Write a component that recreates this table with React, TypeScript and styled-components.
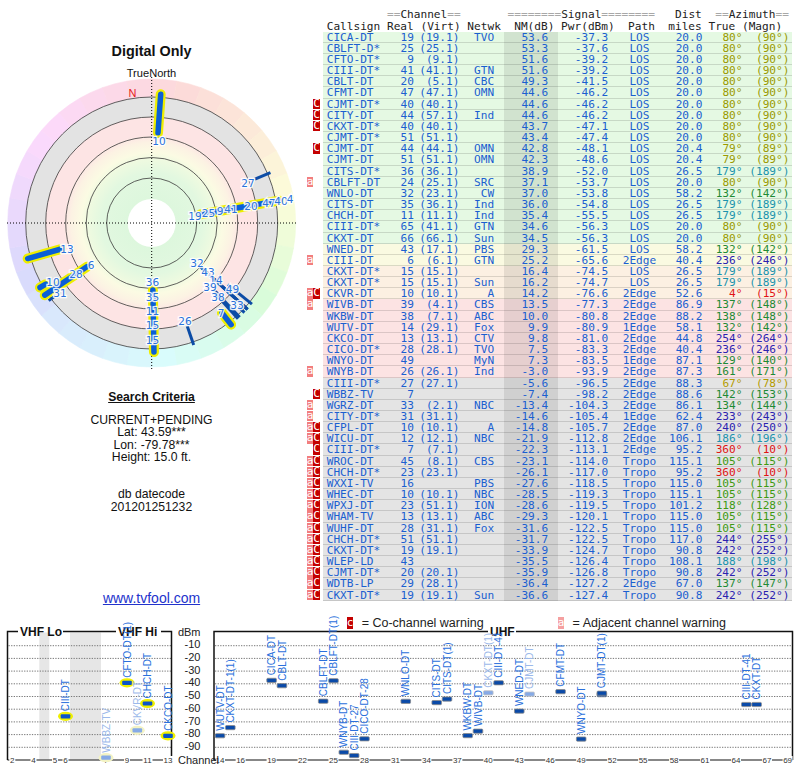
import React from "react";
import styled, { createGlobalStyle } from "styled-components";

const MONO = `"DejaVu Sans Mono", "Liberation Mono", monospace`;
const SANS = `"Liberation Sans", Arial, sans-serif`;
const RH = 11.17;

const GlobalStyle = createGlobalStyle`
  html, body { margin: 0; padding: 0; background: #ffffff; }
  body { font-family: ${SANS}; }
`;

type Band = "g" | "y" | "o" | "p" | "x";
type R = [string, string, string, string, string, number, string, string, string, number, number, Band];

const ROWS: R[] = [
  ["", "CICA-DT", "19", "(19.1)", "TVO", 53.6, "-37.3", "LOS", "20.0", 80, 90, "g"],
  ["", "CBLFT-D*", "25", "(25.1)", "", 53.3, "-37.6", "LOS", "20.0", 80, 90, "g"],
  ["", "CFTO-DT*", "9", "(9.1)", "", 51.6, "-39.2", "LOS", "20.0", 80, 90, "g"],
  ["", "CIII-DT*", "41", "(41.1)", "GTN", 51.6, "-39.2", "LOS", "20.0", 80, 90, "g"],
  ["", "CBLT-DT", "20", "(5.1)", "CBC", 49.3, "-41.5", "LOS", "20.0", 80, 90, "g"],
  ["", "CFMT-DT", "47", "(47.1)", "OMN", 44.6, "-46.2", "LOS", "20.0", 80, 90, "g"],
  ["c", "CJMT-DT*", "40", "(40.1)", "", 44.6, "-46.2", "LOS", "20.0", 80, 90, "g"],
  ["c", "CITY-DT", "44", "(57.1)", "Ind", 44.6, "-46.2", "LOS", "20.0", 80, 90, "g"],
  ["c", "CKXT-DT*", "40", "(40.1)", "", 43.7, "-47.1", "LOS", "20.0", 80, 90, "g"],
  ["", "CJMT-DT*", "51", "(51.1)", "", 43.4, "-47.4", "LOS", "20.0", 80, 90, "g"],
  ["c", "CJMT-DT", "44", "(44.1)", "OMN", 42.8, "-48.1", "LOS", "20.4", 79, 89, "g"],
  ["", "CJMT-DT", "51", "(51.1)", "OMN", 42.3, "-48.6", "LOS", "20.4", 79, 89, "g"],
  ["", "CITS-DT*", "36", "(36.1)", "", 38.9, "-52.0", "LOS", "26.5", 179, 189, "g"],
  ["a", "CBLFT-DT", "24", "(25.1)", "SRC", 37.1, "-53.7", "LOS", "20.0", 80, 90, "g"],
  ["", "WNLO-DT", "32", "(23.1)", "CW", 37.0, "-53.8", "LOS", "58.2", 132, 142, "g"],
  ["", "CITS-DT", "35", "(36.1)", "Ind", 36.0, "-54.8", "LOS", "26.5", 179, 189, "g"],
  ["", "CHCH-DT", "11", "(11.1)", "Ind", 35.4, "-55.5", "LOS", "26.5", 179, 189, "g"],
  ["", "CIII-DT*", "65", "(41.1)", "GTN", 34.6, "-56.3", "LOS", "20.0", 80, 90, "g"],
  ["", "CKXT-DT", "66", "(66.1)", "Sun", 34.5, "-56.3", "LOS", "20.0", 80, 90, "g"],
  ["", "WNED-DT", "43", "(17.1)", "PBS", 29.3, "-61.5", "LOS", "58.2", 132, 142, "y"],
  ["a", "CIII-DT", "6", "(6.1)", "GTN", 25.2, "-65.6", "2Edge", "40.4", 236, 246, "y"],
  ["", "CKXT-DT*", "15", "(15.1)", "", 16.4, "-74.5", "LOS", "26.5", 179, 189, "o"],
  ["", "CKXT-DT*", "15", "(15.1)", "Sun", 16.2, "-74.7", "LOS", "26.5", 179, 189, "o"],
  ["ac", "CKVR-DT", "10", "(10.1)", "A", 14.2, "-76.6", "2Edge", "52.6", 4, 15, "o"],
  ["a", "WIVB-DT", "39", "(4.1)", "CBS", 13.5, "-77.3", "2Edge", "86.9", 137, 148, "p"],
  ["", "WKBW-DT", "38", "(7.1)", "ABC", 10.0, "-80.8", "2Edge", "88.2", 138, 148, "p"],
  ["", "WUTV-DT", "14", "(29.1)", "Fox", 9.9, "-80.9", "1Edge", "58.1", 132, 142, "p"],
  ["", "CKCO-DT", "13", "(13.1)", "CTV", 9.8, "-81.0", "2Edge", "44.8", 254, 264, "p"],
  ["", "CICO-DT*", "28", "(28.1)", "TVO", 7.5, "-83.3", "2Edge", "40.4", 236, 246, "p"],
  ["", "WNYO-DT", "49", "", "MyN", 7.3, "-83.5", "1Edge", "87.1", 129, 140, "p"],
  ["a", "WNYB-DT", "26", "(26.1)", "Ind", -3.0, "-93.9", "2Edge", "87.3", 161, 171, "p"],
  ["", "CIII-DT*", "27", "(27.1)", "", -5.6, "-96.5", "2Edge", "88.3", 67, 78, "x"],
  ["c", "WBBZ-TV", "7", "", "", -7.4, "-98.2", "2Edge", "88.6", 142, 153, "x"],
  ["a", "WGRZ-DT", "33", "(2.1)", "NBC", -13.4, "-104.3", "2Edge", "86.1", 134, 144, "x"],
  ["a", "CITY-DT*", "31", "(31.1)", "", -14.6, "-105.4", "1Edge", "62.4", 233, 243, "x"],
  ["ac", "CFPL-DT", "10", "(10.1)", "A", -14.8, "-105.7", "2Edge", "87.0", 240, 250, "x"],
  ["ac", "WICU-DT", "12", "(12.1)", "NBC", -21.9, "-112.8", "2Edge", "106.1", 186, 196, "x"],
  ["c", "CIII-DT*", "7", "(7.1)", "", -22.3, "-113.1", "2Edge", "95.2", 360, 10, "x"],
  ["ac", "WROC-DT", "45", "(8.1)", "CBS", -23.1, "-114.0", "Tropo", "115.1", 105, 115, "x"],
  ["ac", "CHCH-DT*", "23", "(23.1)", "", -26.1, "-117.0", "Tropo", "95.2", 360, 10, "x"],
  ["ac", "WXXI-TV", "16", "", "PBS", -27.6, "-118.5", "Tropo", "115.0", 105, 115, "x"],
  ["ac", "WHEC-DT", "10", "(10.1)", "NBC", -28.5, "-119.3", "Tropo", "115.1", 105, 115, "x"],
  ["ac", "WPXJ-DT", "23", "(51.1)", "ION", -28.6, "-119.5", "Tropo", "101.2", 118, 128, "x"],
  ["ac", "WHAM-TV", "13", "(13.1)", "ABC", -29.3, "-120.1", "Tropo", "115.0", 105, 115, "x"],
  ["ac", "WUHF-DT", "28", "(31.1)", "Fox", -31.6, "-122.5", "Tropo", "115.0", 105, 115, "x"],
  ["ac", "CHCH-DT*", "51", "(51.1)", "", -31.7, "-122.5", "Tropo", "117.0", 244, 255, "x"],
  ["ac", "CKXT-DT*", "19", "(19.1)", "", -33.9, "-124.7", "Tropo", "90.8", 242, 252, "x"],
  ["ac", "WLEP-LD", "43", "", "", -35.5, "-126.4", "Tropo", "108.1", 188, 198, "x"],
  ["ac", "CJMT-DT*", "20", "(20.1)", "", -35.9, "-126.8", "Tropo", "90.8", 242, 252, "x"],
  ["ac", "WDTB-LP", "29", "(28.1)", "", -36.4, "-127.2", "2Edge", "67.0", 137, 147, "x"],
  ["ac", "CKXT-DT*", "19", "(19.1)", "Sun", -36.6, "-127.4", "Tropo", "90.8", 242, 252, "x"],
];

const BAND_BG: Record<Band, string> = {
  g: "#e5f9e3",
  y: "#fafae1",
  o: "#fcf0e2",
  p: "#fce3e3",
  x: "#e4e4e4",
};

const azColor = (az: number) => {
  if (az >= 350 || az < 20) return "#e01414";
  if (az < 72) return "#b39b00";
  if (az < 95) return "#9a9a00";
  if (az < 125) return "#3e9a12";
  if (az < 170) return "#1e8a35";
  if (az < 200) return "#1b93ad";
  return "#2b22b0";
};

/* ---------- layout ---------- */

const Page = styled.div`
  width: 800px;
  height: 768px;
  overflow: hidden;
  font-family: ${SANS};
  color: #111;
`;

const Top = styled.div`
  display: flex;
  height: 615px;
`;

const LeftCol = styled.div`
  width: 303px;
  flex: none;
  display: flex;
  flex-direction: column;
  align-items: center;
  padding-top: 43px;
  box-sizing: border-box;
  text-align: center;
`;

const Title = styled.div`
  font-weight: bold;
  font-size: 14.4px;
  line-height: 17px;
`;

const NorthLabel = styled.div`
  font-size: 11.1px;
  line-height: 13px;
  margin-top: 7px;
`;

const RadarSvg = styled.svg`
  display: block;
  margin-top: -2px;
  overflow: visible;
`;

const CriteriaTitle = styled.div`
  font-weight: bold;
  font-size: 12.2px;
  line-height: 15px;
  text-decoration: underline;
  margin-top: 17.8px;
`;

const InfoBlock = styled.div<{ $gap: number }>`
  font-size: 12.2px;
  line-height: 12.4px;
  margin-top: ${(p) => p.$gap}px;
`;

const SiteLink = styled.a`
  display: block;
  font-size: 14px;
  line-height: 16px;
  margin-top: 77.4px;
  color: #2233cc;
  text-decoration: underline;
`;

/* ---------- table ---------- */

const TableWrap = styled.div`
  flex: none;
  width: 489px;
  padding-top: 9.4px;
  font-family: ${MONO};
  font-size: 11.13px;
`;

const HeadLine = styled.div`
  padding-left: 23.7px;
  height: ${RH}px;
  line-height: ${RH}px;
  white-space: pre;
  color: #222;
`;

const Eq = styled.span`
  color: #a8a8a8;
`;

const Row = styled.div`
  display: flex;
  height: ${RH}px;
  line-height: ${RH}px;
`;

const Flags = styled.div`
  width: 20px;
  flex: none;
  display: flex;
  justify-content: flex-end;
  padding-right: 3px;
  box-sizing: border-box;
`;

const Flag = styled.span<{ $kind: "a" | "c" | "" }>`
  width: 6.7px;
  height: 10.3px;
  line-height: 10.3px;
  text-align: center;
  color: #fff;
  background: ${(p) => (p.$kind === "a" ? "#f27e7e" : p.$kind === "c" ? "#c40000" : "transparent")};
`;

const Cells = styled.div<{ $bg: string }>`
  flex: 1;
  display: grid;
  grid-template-columns: 56px 35px 45.4px 34.8px 9.8px 54px 50.3px 62.4px 31.8px 40px 47px 2.5px;
  background: ${(p) => p.$bg};
  box-shadow: inset 0 -1px 0 rgba(0, 0, 0, 0.13);
  color: #1b5fd0;
`;

const Cell = styled.span<{ $align?: "flex-start" | "flex-end" | "center" }>`
  display: flex;
  justify-content: ${(p) => p.$align ?? "flex-end"};
  white-space: pre;
`;

const CallCell = styled(Cell)`
  padding-left: 3.7px;
`;

const NmCell = styled(Cell)`
  background: rgba(0, 0, 0, 0.085);
  padding-right: 9.8px;
`;

const AzCell = styled(Cell)<{ $color: string }>`
  color: ${(p) => p.$color};
`;

/* ---------- bottom ---------- */

const Bottom = styled.div`
  height: 153px;
`;

const Legend = styled.div`
  display: flex;
  align-items: center;
  height: 16px;
  padding-left: 346.7px;
  gap: 74px;
  font-size: 12.5px;
  color: #222;
`;

const LegendItem = styled.div`
  display: flex;
  align-items: center;
  gap: 8.3px;
`;

const LegendBadge = styled.span<{ $kind: "a" | "c" }>`
  width: 6.7px;
  height: 11.7px;
  line-height: 11.7px;
  text-align: center;
  font-family: ${MONO};
  font-size: 11px;
  color: #fff;
  background: ${(p) => (p.$kind === "a" ? "#f5a0a0" : "#c40000")};
`;

const ChartSvg = styled.svg`
  display: block;
  overflow: visible;
`;

/* ---------- radar ---------- */

const CX = 151.7;
const CY = 145;
const pt = (r: number, az: number): [number, number] => {
  const a = (az * Math.PI) / 180;
  return [CX + r * Math.sin(a), CY - r * Math.cos(a)];
};
const ringPath = (r1: number, r2: number, a1: number, a2: number) => {
  const [x1, y1] = pt(r2, a1);
  const [x2, y2] = pt(r2, a2);
  const [x3, y3] = pt(r1, a2);
  const [x4, y4] = pt(r1, a1);
  return `M${x1} ${y1}A${r2} ${r2} 0 0 1 ${x2} ${y2}L${x3} ${y3}A${r1} ${r1} 0 0 0 ${x4} ${y4}Z`;
};
const HUE_STOPS: [number, number][] = [
  [0, 350], [30, 375], [60, 400], [90, 435], [135, 495], [180, 545], [225, 575], [270, 625], [315, 665], [360, 710],
];
const hueFor = (az: number) => {
  for (let i = 0; i < HUE_STOPS.length - 1; i++) {
    const [a0, h0] = HUE_STOPS[i];
    const [a1, h1] = HUE_STOPS[i + 1];
    if (az >= a0 && az <= a1) return (h0 + ((az - a0) / (a1 - a0)) * (h1 - h0)) % 360;
  }
  return 350;
};

const RADAR_LABELS: [string, number, number][] = [
  ["10", 159, 141], ["27", 248, 183],
  ["19", 195, 215.5], ["25", 208.5, 213], ["9", 220, 211], ["41", 231, 209], ["20", 251, 205.5], ["47", 269, 202.5], ["40", 281, 200.5], ["4", 290, 199],
  ["36", 152.5, 282], ["35", 152.5, 296.5], ["11", 152.5, 310.5], ["15", 152.5, 325], ["15", 152.5, 339.5],
  ["32", 197, 263], ["43", 208, 272], ["14", 216, 280], ["39", 210, 286.5], ["49", 232.5, 289], ["38", 218, 297], ["33", 237, 305], ["7", 221, 313],
  ["26", 185, 320.5],
  ["13", 67, 249], ["6", 91, 264.5], ["28", 76, 274], ["10", 53, 281.5], ["31", 60, 293],
];

function Radar() {
  const wedges = [];
  for (let i = 0; i < 36; i++) {
    const a1 = i * 10;
    const c = `hsl(${hueFor(a1 + 5)}, 85%, 92%)`;
    wedges.push(<path key={i} d={ringPath(126, 144, a1, a1 + 10)} fill={c} stroke={c} strokeWidth={0.6} />);
  }
  const shown = ROWS.filter((r) => r[5] > -20).map((r) => ({
    az: r[9],
    ri: 106 - 1.1 * r[5],
    vhf: parseInt(r[2], 10) <= 13,
  }));
  const thin = shown.filter((s) => !s.vhf);
  const vhf = shown.filter((s) => s.vhf);
  return (
    <RadarSvg width={303} height={294} viewBox="0 0 303 294">
      <defs>
        <radialGradient id="bands" cx={CX} cy={CY} r={126} gradientUnits="userSpaceOnUse">
          <stop offset="0.19" stopColor="#ddf7dd" />
          <stop offset="0.40" stopColor="#e2f8e0" />
          <stop offset="0.50" stopColor="#eefae0" />
          <stop offset="0.56" stopColor="#fbfbe3" />
          <stop offset="0.64" stopColor="#fcf2e3" />
          <stop offset="0.70" stopColor="#fde4e4" />
          <stop offset="0.838" stopColor="#fde4e4" />
          <stop offset="0.846" stopColor="#e3e3e3" />
          <stop offset="1" stopColor="#e3e3e3" />
        </radialGradient>
      </defs>
      {wedges}
      <circle cx={CX} cy={CY} r={126} fill="url(#bands)" />
      <circle cx={CX} cy={CY} r={24} fill="#ffffff" />
      {[126, 106, 86, 65.5, 45].map((r) => (
        <circle key={r} cx={CX} cy={CY} r={r} fill="none" stroke="#3a3a3a" strokeWidth={0.8} />
      ))}
      <line x1={7} y1={CY} x2={297} y2={CY} stroke="#000" strokeWidth={1} strokeDasharray="1 2" />
      <line x1={CX} y1={CY - 146} x2={CX} y2={CY + 146} stroke="#000" strokeWidth={1} strokeDasharray="1 2" />
      <text x={132.5} y={19} fontSize={11} fill="#e52020" textAnchor="middle" fontFamily={SANS}>
        N
      </text>
      {thin.map((s, i) => {
        const [x1, y1] = pt(s.ri, s.az);
        const [x2, y2] = pt(129, s.az);
        return <line key={`t${i}`} x1={x1} y1={y1} x2={x2} y2={y2} stroke="#0c4ca6" strokeWidth={3} />;
      })}
      {vhf.map((s, i) => {
        const [x1, y1] = pt(s.ri, s.az);
        const [x2, y2] = pt(129, s.az);
        return (
          <g key={`v${i}`}>
            <line x1={x1} y1={y1} x2={x2} y2={y2} stroke="#eeee00" strokeWidth={10} strokeLinecap="round" />
            <line x1={x1} y1={y1} x2={x2} y2={y2} stroke="#0b5fd6" strokeWidth={5.5} strokeLinecap="round" />
          </g>
        );
      })}
      {RADAR_LABELS.map(([t, x, y], i) => (
        <text
          key={`l${i}`}
          x={x}
          y={y - 78}
          fontSize={10.5}
          fontFamily={`"DejaVu Sans", ${SANS}`}
          fill="#2a72dc"
          stroke="#ffffff"
          strokeWidth={2.6}
          strokeOpacity={0.9}
          paintOrder="stroke"
          textAnchor="middle"
          dominantBaseline="central"
        >
          {t}
        </text>
      ))}
    </RadarSvg>
  );
}

/* ---------- chart ---------- */

const gy = (dbm: number) => 645.7 + (-dbm - 10) * 1.27;
const ux = (ch: number) => 220 + (ch - 14) * 10.32;
const VX: Record<number, number> = { 2: 12.3, 3: 22.7, 4: 33.5, 5: 55, 6: 65.5, 7: 106, 8: 116.5, 9: 127, 10: 137.3, 11: 147.5, 12: 157.8, 13: 168 };

type Mk = { x: number; p: number; label?: string; vhf?: boolean; faded?: boolean };
const MARKERS: Mk[] = [
  { x: VX[6], p: -65.6, label: "CIII-DT", vhf: true },
  { x: VX[7], p: -98.2, label: "WBBZ-TV", vhf: true, faded: true },
  { x: VX[9], p: -39.2, label: "CFTO-DT(1)", vhf: true },
  { x: VX[10], p: -76.6, label: "CKVR-DT", vhf: true, faded: true },
  { x: VX[11], p: -55.5, label: "CHCH-DT", vhf: true },
  { x: VX[13], p: -81.0, label: "CKCO-DT", vhf: true },
  { x: ux(14), p: -80.9, label: "WUTV-DT" },
  { x: ux(15), p: -74.5, label: "CKXT-DT-1(1)" },
  { x: ux(19), p: -37.3, label: "CICA-DT" },
  { x: ux(20), p: -41.5, label: "CBLT-DT" },
  { x: ux(24), p: -53.7, label: "CBLFT-DT" },
  { x: ux(25), p: -37.6, label: "CBLFT-DT(1)" },
  { x: ux(26), p: -93.9, label: "WNYB-DT" },
  { x: ux(27), p: -96.5, label: "CIII-DT-27" },
  { x: ux(28), p: -83.3, label: "CICO-DT-28" },
  { x: ux(32), p: -53.8, label: "WNLO-DT" },
  { x: ux(35), p: -54.8, label: "CITS-DT" },
  { x: ux(36), p: -52.0, label: "CITS-DT(1)" },
  { x: ux(38), p: -80.8, label: "WKBW-DT" },
  { x: ux(39), p: -77.3, label: "WIVB-DT" },
  { x: ux(40), p: -47.1, label: "CKXT-DT(1)", faded: true },
  { x: ux(41), p: -39.2, label: "CIII-DT-41" },
  { x: ux(43), p: -61.5, label: "WNED-DT" },
  { x: ux(44), p: -48.1, label: "CJMT-DT", faded: true },
  { x: ux(47), p: -46.2, label: "CFMT-DT" },
  { x: ux(49), p: -83.5, label: "WNYO-DT" },
  { x: ux(51), p: -48.6 },
  { x: ux(51), p: -47.4, label: "CJMT-DT(1)" },
  { x: ux(65), p: -56.3, label: "CIII-DT-41" },
  { x: ux(66), p: -56.3, label: "CKXT-DT" },
];

const VHF_TICKS = [2, 4, 5, 6, 7, 9, 11, 13];
const UHF_TICKS = [14, 16, 19, 22, 25, 28, 31, 34, 37, 40, 43, 46, 49, 52, 55, 58, 61, 64, 67, 69];
const GRID = [1, 2, 3, 4, 5, 6, 7, 8, 9];

function Chart() {
  const tick = (label: string, x: number, key: string) => {
    const w = label.length > 1 ? 10 : 6;
    return (
      <g key={key}>
        <rect x={x - w / 2} y={756} width={w} height={8} fill="#ffffff" />
        <text x={x} y={762.8} fontSize={8} textAnchor="middle" fill="#333" fontFamily={SANS}>
          {label}
        </text>
      </g>
    );
  };
  return (
    <ChartSvg width={800} height={137} viewBox="0 631 800 137">
      <rect x={39.3} y={632.5} width={10} height={127} fill="#e6e6e6" />
      <rect x={70} y={632.5} width={31} height={127} fill="#e6e6e6" />
      {GRID.map((k) => {
        const y = gy(-10 * k);
        return (
          <g key={k}>
            <line x1={8.5} y1={y} x2={171} y2={y} stroke="#777" strokeWidth={1} strokeDasharray="1.3 1.3" />
            <line x1={215} y1={y} x2={792} y2={y} stroke="#777" strokeWidth={1} strokeDasharray="1.3 1.3" />
            <text x={200.5} y={y + 2.6} fontSize={11} textAnchor="end" fill="#222" fontFamily={SANS}>
              {-10 * k}
            </text>
          </g>
        );
      })}
      <text x={200.5} y={636} fontSize={11} textAnchor="end" fill="#222" fontFamily={SANS}>
        dBm
      </text>
      <g stroke="#111" strokeWidth={1.5} fill="none">
        <path d="M7.5 631.5V760M171.5 631.5V760M6.8 631.5H18M63 631.5H116M161 631.5H172.2" />
        <path d="M214 631.5V760M792.5 631.5V760M213.3 631.5H488M516 631.5H793.2" />
      </g>
      <line x1={7.5} y1={760} x2={171.5} y2={760} stroke="#111" strokeWidth={1.2} />
      <line x1={214} y1={760} x2={792.5} y2={760} stroke="#111" strokeWidth={1.2} />
      <text x={20} y={636} fontSize={12} fontWeight="bold" fill="#111" fontFamily={SANS}>
        VHF Lo
      </text>
      <text x={118} y={636} fontSize={12} fontWeight="bold" fill="#111" fontFamily={SANS}>
        VHF Hi
      </text>
      <text x={490} y={636} fontSize={12} fontWeight="bold" fill="#111" fontFamily={SANS}>
        UHF
      </text>
      {VHF_TICKS.map((c) => tick(String(c), VX[c], `v${c}`))}
      {UHF_TICKS.map((c) => tick(String(c), ux(c), `u${c}`))}
      <text x={178} y={764} fontSize={11} fill="#222" fontFamily={SANS}>
        Channel
      </text>
      {MARKERS.map((m, i) => {
        const y = gy(m.p);
        return (
          <g key={`m${i}`}>
            {m.vhf && <ellipse cx={m.x} cy={y} rx={7.5} ry={4.6} fill={m.faded ? "#f3f3c4" : "#f0f000"} />}
            <rect
              x={m.x - 4.8}
              y={y - 2.1}
              width={9.6}
              height={4.2}
              rx={1}
              fill={m.faded ? "#86aae6" : m.vhf ? "#0b55c8" : "#0a4aa8"}
              stroke={m.vhf ? "none" : m.faded ? "#c4c4c4" : "#8a8a8a"}
              strokeWidth={0.8}
            />
            {m.label && (
              <text
                transform={`translate(${m.x + 3.6} ${y - 5}) rotate(-90)`}
                fontSize={10}
                fill={m.faded ? "#9cb9ea" : "#2a70dc"}
                fontFamily={SANS}
              >
                {m.label}
              </text>
            )}
          </g>
        );
      })}
    </ChartSvg>
  );
}

/* ---------- app ---------- */

export default function App() {
  return (
    <>
      <GlobalStyle />
      <Page>
        <Top>
          <LeftCol>
            <Title>Digital Only</Title>
            <NorthLabel>TrueNorth</NorthLabel>
            <Radar />
            <CriteriaTitle>Search Criteria</CriteriaTitle>
            <InfoBlock $gap={9}>
              CURRENT+PENDING
              <br />
              Lat: 43.59***
              <br />
              Lon: -79.78***
              <br />
              Height: 15.0 ft.
            </InfoBlock>
            <InfoBlock $gap={24.7}>
              db datecode
              <br />
              201201251232
            </InfoBlock>
            <SiteLink href="#">www.tvfool.com</SiteLink>
          </LeftCol>
          <TableWrap>
            <HeadLine>
              {"         "}
              <Eq>==</Eq>Channel<Eq>==</Eq>
              {"       "}
              <Eq>========</Eq>Signal<Eq>========</Eq>
              {"   Dist  "}
              <Eq>==</Eq>Azimuth<Eq>==</Eq>
            </HeadLine>
            <HeadLine>{"Callsign Real (Virt) Netwk  NM(dB) Pwr(dBm)  Path  miles True (Magn)"}</HeadLine>
            {ROWS.map((r, i) => {
              const [w, call, real, virt, net, nm, pwr, path, dist, az, mg, band] = r;
              const col = azColor(az);
              return (
                <Row key={i}>
                  <Flags>
                    <Flag $kind={w.includes("a") ? "a" : ""}>{w.includes("a") ? "a" : ""}</Flag>
                    <Flag $kind={w.includes("c") ? "c" : ""}>{w.includes("c") ? "C" : ""}</Flag>
                  </Flags>
                  <Cells $bg={BAND_BG[band]}>
                    <CallCell $align="flex-start">{call}</CallCell>
                    <Cell>{real}</Cell>
                    <Cell>{virt}</Cell>
                    <Cell>{net}</Cell>
                    <Cell />
                    <NmCell>{nm.toFixed(1)}</NmCell>
                    <Cell>{pwr}</Cell>
                    <Cell $align="center">{path}</Cell>
                    <Cell>{dist}</Cell>
                    <AzCell $color={col}>{`${az}°`}</AzCell>
                    <AzCell $color={col}>{`(${mg}°)`}</AzCell>
                    <Cell />
                  </Cells>
                </Row>
              );
            })}
          </TableWrap>
        </Top>
        <Bottom>
          <Legend>
            <LegendItem>
              <LegendBadge $kind="c">c</LegendBadge>
              <span>= Co-channel warning</span>
            </LegendItem>
            <LegendItem>
              <LegendBadge $kind="a">a</LegendBadge>
              <span>= Adjacent channel warning</span>
            </LegendItem>
          </Legend>
          <Chart />
        </Bottom>
      </Page>
    </>
  );
}
